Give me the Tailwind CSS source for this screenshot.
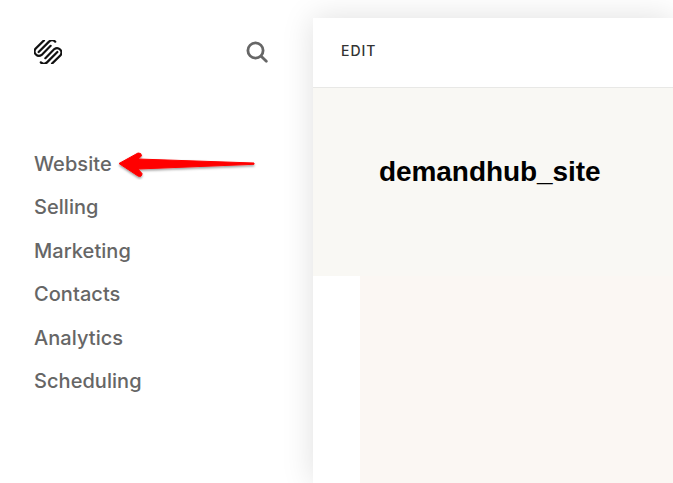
<!DOCTYPE html>
<html>
<head>
<meta charset="utf-8">
<script src="https://cdn.jsdelivr.net/npm/@tailwindcss/browser@4"></script>
</head>
<body class="bg-white overflow-hidden">
<div class="relative flex w-[673px] h-[483px] overflow-hidden bg-white font-['Inter',sans-serif]">
  <aside class="w-[313px] shrink-0 flex flex-col pl-[34px] pr-[45px]">
    <div class="flex items-center justify-between h-[24px] mt-[40px]">
      <svg width="28" height="24" viewBox="1.2 2.5 21.6 19" fill="none" stroke="#111" stroke-width="1.75" stroke-linecap="round">
        <path d="M9.9 16.9 L17 9.7 A3.5 3.5 0 0 1 21.9 14.6 L15.2 21.2"/>
        <path d="M19.4 12 L11.2 20.2 A3.5 3.5 0 0 1 6.3 20.2"/>
        <path d="M14.1 7.1 L7 14.3 A3.5 3.5 0 0 1 2.1 9.4 L8.8 2.8"/>
        <path d="M4.6 12 L12.8 3.8 A3.5 3.5 0 0 1 17.7 3.8"/>
      </svg>
      <svg width="22" height="22" viewBox="0 0 22 22" fill="none" stroke="#666" stroke-width="2.8" stroke-linecap="round">
        <circle cx="9.5" cy="9.5" r="7.6"/>
        <path d="M15.2 15.2 L20.3 20.3"/>
      </svg>
    </div>
    <nav class="mt-[87.6px] flex flex-col text-[20px] font-medium leading-[24px] text-[#666] gap-[19.5px] tracking-[0.05px]">
      <a>Website</a>
      <a>Selling</a>
      <a>Marketing</a>
      <a>Contacts</a>
      <a>Analytics</a>
      <a>Scheduling</a>
    </nav>
  </aside>
  <main class="flex-1 flex flex-col mt-[18px] bg-white shadow-[0_0_30px_rgba(0,0,0,0.13)]">
    <header class="h-[70px] shrink-0 flex items-center pl-[28px] border-b border-[#e8e8e6] pb-[4px]">
      <span class="text-[14px] font-medium tracking-[1px] text-[#333]">EDIT</span>
    </header>
    <section class="h-[188px] shrink-0 bg-[#f9f8f4] pl-[66px] pt-[68px]">
      <h1 class="font-['Liberation_Sans',sans-serif] font-bold text-[28px] tracking-[-0.07px] leading-[32px] text-black">demandhub_site</h1>
    </section>
    <div class="flex-1 flex">
      <div class="w-[47px] bg-white"></div>
      <div class="flex-1 bg-[#fbf7f3]"></div>
    </div>
  </main>
  <svg class="absolute left-[116px] top-[150px]" width="142" height="30" viewBox="0 0 142 30">
    <defs>
      <filter id="s" x="-5%" y="-20%" width="110%" height="150%"><feDropShadow dx="0" dy="1.5" stdDeviation="1" flood-color="#000" flood-opacity="0.4"/></filter>
    </defs>
    <path d="M3 13.5 L22 3 Q25.5 2.5 25.5 6 L22 9 L138 13 L138 14.3 L22 19 L26 23.5 Q26 27.5 22 26 Z" fill="#f00" stroke="#f00" stroke-linejoin="round" filter="url(#s)"/>
  </svg>
</div>
</body>
</html>
